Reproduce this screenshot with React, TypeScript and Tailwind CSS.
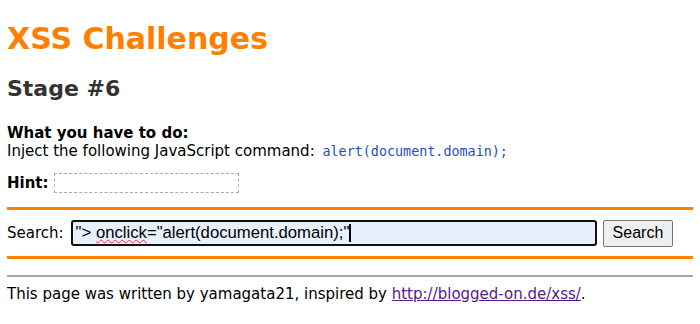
import React from 'react';

const verdana = { fontFamily: '"DejaVu Sans", Verdana, sans-serif' };
const arial = { fontFamily: '"Liberation Sans", Arial, sans-serif' };

export default function App() {
  return (
    <div className="min-h-screen bg-white text-[15px] leading-[18px] text-black px-[7px] pt-[21px]" style={verdana}>
      <h1 className="text-[30px] font-bold text-[#ff7f00] leading-[36px]">XSS Challenges</h1>
      <h2 className="mt-[18px] text-[22px] font-bold text-[#333333] leading-[28px]">Stage #6</h2>

      <div className="mt-[21px]">
        <div className="font-bold">What you have to do:</div>
        <div>
          Inject the following JavaScript command:{' '}
          <code className="ml-[3px] text-[13.4px] text-[#1f4fc0]" style={{ fontFamily: '"DejaVu Sans Mono", monospace' }}>
            alert(document.domain);
          </code>
        </div>
      </div>

      <div className="mt-[12px] flex items-center gap-[5px]">
        <span className="font-bold">Hint:</span>
        <span className="w-[185px] h-[20px] border border-dashed border-[#aaaaaa]" />
      </div>

      <div className="mt-[14px] border-t-[3px] border-[#ff7f00]" />
      <div className="flex items-center h-[46px]">
        <span className="mr-[7px]">Search:</span>
        <div
          className="w-[526px] h-[26px] border-2 border-[#101010] rounded-[3px] bg-[#e8f0fe] flex items-center px-[3px] text-[16.7px]"
          style={arial}
        >
          <span className="whitespace-pre">"&gt; </span>
          <span className="underline decoration-wavy decoration-red-500 decoration-1">onclick</span>
          <span>="alert(document.domain);"</span>
          <span className="w-[2px] h-[18px] bg-black" />
        </div>
        <button
          className="ml-[6px] h-[27px] px-[9px] border border-[#767676] rounded-[2px] bg-[#efefef] text-[16px]"
          style={arial}
        >
          Search
        </button>
      </div>
      <div className="border-t-[3px] border-[#ff7f00]" />

      <div className="mt-[16px] border-t-2 border-[#a8a8a8]" />
      <p className="mt-[8px]">
        This page was written by yamagata21, inspired by{' '}
        <a href="#" className="text-[#551a8b] underline">http://blogged-on.de/xss/</a>.
      </p>
    </div>
  );
}
